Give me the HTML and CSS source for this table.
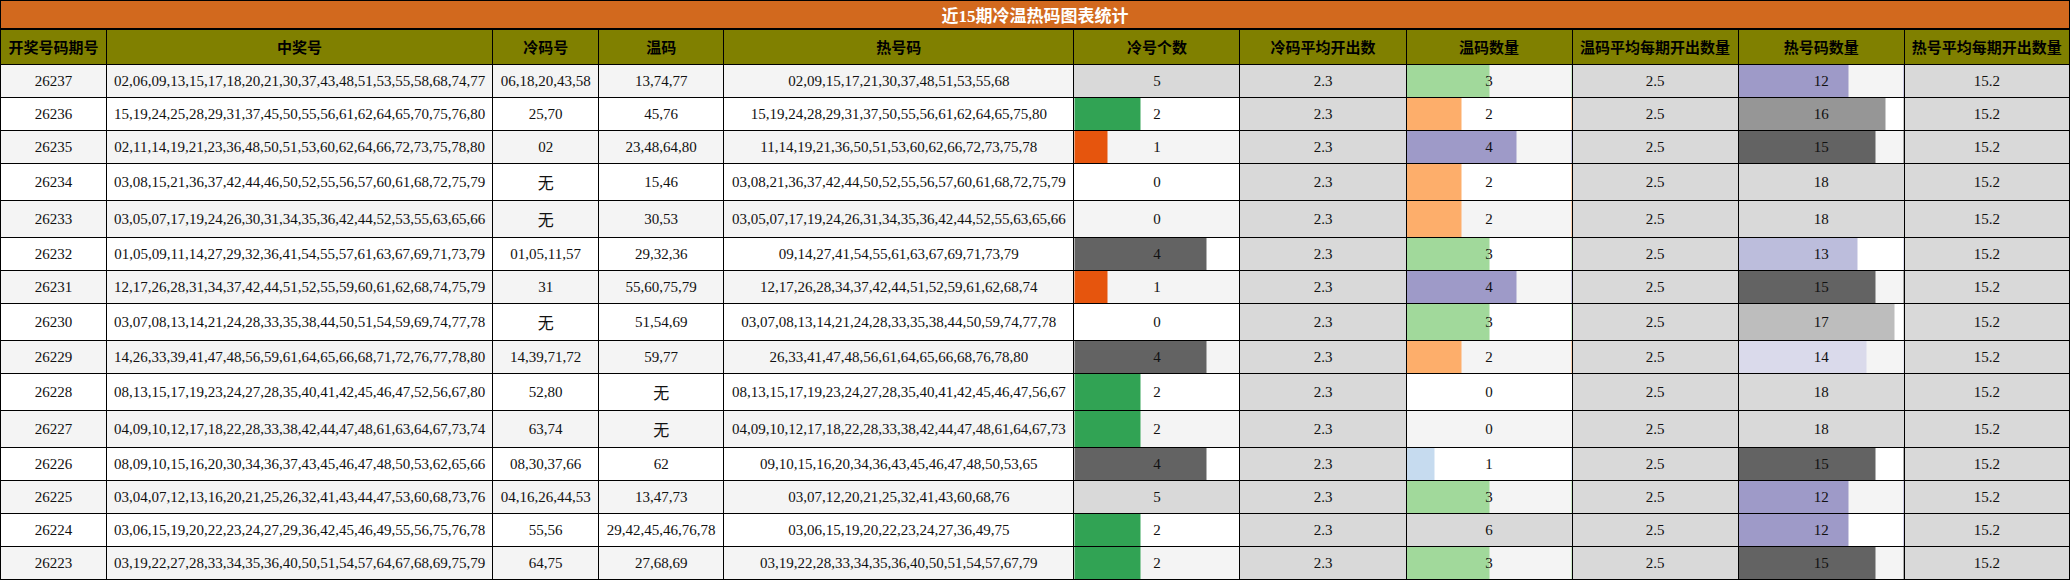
FILE: index.html
```html
<!DOCTYPE html>
<html lang="zh-CN">
<head>
<meta charset="utf-8">
<title>近15期冷温热码图表统计</title>
<link rel="stylesheet" href="styles.css">
</head>
<body>
<table class="stats">
  <colgroup>
    <col class="w-issue"><col class="w-win"><col class="w-cold"><col class="w-warm"><col class="w-hot">
    <col class="w-num"><col class="w-num"><col class="w-num"><col class="w-num"><col class="w-num"><col class="w-last">
  </colgroup>
  <thead>
    <tr><th class="title" colspan="11">近15期冷温热码图表统计</th></tr>
    <tr class="head">
      <th>开奖号码期号</th><th>中奖号</th><th>冷码号</th><th>温码</th><th>热号码</th>
      <th>冷号个数</th><th>冷码平均开出数</th><th>温码数量</th><th>温码平均每期开出数量</th><th>热号码数量</th><th>热号平均每期开出数量</th>
    </tr>
  </thead>
  <tbody>
    <tr><td>26237</td><td>02,06,09,13,15,17,18,20,21,30,37,43,48,51,53,55,58,68,74,77</td><td>06,18,20,43,58</td><td>13,74,77</td><td>02,09,15,17,21,30,37,48,51,53,55,68</td>
      <td class="bar c-grey4" style="--w:100%">5</td><td class="avg">2.3</td><td class="bar c-green3" style="--w:50%">3</td><td class="avg">2.5</td><td class="bar c-purple2" style="--w:66.67%">12</td><td class="avg">15.2</td></tr>
    <tr><td>26236</td><td>15,19,24,25,28,29,31,37,45,50,55,56,61,62,64,65,70,75,76,80</td><td>25,70</td><td>45,76</td><td>15,19,24,28,29,31,37,50,55,56,61,62,64,65,75,80</td>
      <td class="bar c-green1" style="--w:40%">2</td><td class="avg">2.3</td><td class="bar c-orange3" style="--w:33.33%">2</td><td class="avg">2.5</td><td class="bar c-grey2" style="--w:88.89%">16</td><td class="avg">15.2</td></tr>
    <tr><td>26235</td><td>02,11,14,19,21,23,36,48,50,51,53,60,62,64,66,72,73,75,78,80</td><td>02</td><td>23,48,64,80</td><td>11,14,19,21,36,50,51,53,60,62,66,72,73,75,78</td>
      <td class="bar c-orange1" style="--w:20%">1</td><td class="avg">2.3</td><td class="bar c-purple2" style="--w:66.67%">4</td><td class="avg">2.5</td><td class="bar c-grey1" style="--w:83.33%">15</td><td class="avg">15.2</td></tr>
    <tr><td>26234</td><td>03,08,15,21,36,37,42,44,46,50,52,55,56,57,60,61,68,72,75,79</td><td class="none">无</td><td>15,46</td><td>03,08,21,36,37,42,44,50,52,55,56,57,60,61,68,72,75,79</td>
      <td>0</td><td class="avg">2.3</td><td class="bar c-orange3" style="--w:33.33%">2</td><td class="avg">2.5</td><td class="bar c-grey4" style="--w:100%">18</td><td class="avg">15.2</td></tr>
    <tr><td>26233</td><td>03,05,07,17,19,24,26,30,31,34,35,36,42,44,52,53,55,63,65,66</td><td class="none">无</td><td>30,53</td><td>03,05,07,17,19,24,26,31,34,35,36,42,44,52,55,63,65,66</td>
      <td>0</td><td class="avg">2.3</td><td class="bar c-orange3" style="--w:33.33%">2</td><td class="avg">2.5</td><td class="bar c-grey4" style="--w:100%">18</td><td class="avg">15.2</td></tr>
    <tr><td>26232</td><td>01,05,09,11,14,27,29,32,36,41,54,55,57,61,63,67,69,71,73,79</td><td>01,05,11,57</td><td>29,32,36</td><td>09,14,27,41,54,55,61,63,67,69,71,73,79</td>
      <td class="bar c-grey1" style="--w:80%">4</td><td class="avg">2.3</td><td class="bar c-green3" style="--w:50%">3</td><td class="avg">2.5</td><td class="bar c-purple3" style="--w:72.22%">13</td><td class="avg">15.2</td></tr>
    <tr><td>26231</td><td>12,17,26,28,31,34,37,42,44,51,52,55,59,60,61,62,68,74,75,79</td><td>31</td><td>55,60,75,79</td><td>12,17,26,28,34,37,42,44,51,52,59,61,62,68,74</td>
      <td class="bar c-orange1" style="--w:20%">1</td><td class="avg">2.3</td><td class="bar c-purple2" style="--w:66.67%">4</td><td class="avg">2.5</td><td class="bar c-grey1" style="--w:83.33%">15</td><td class="avg">15.2</td></tr>
    <tr><td>26230</td><td>03,07,08,13,14,21,24,28,33,35,38,44,50,51,54,59,69,74,77,78</td><td class="none">无</td><td>51,54,69</td><td>03,07,08,13,14,21,24,28,33,35,38,44,50,59,74,77,78</td>
      <td>0</td><td class="avg">2.3</td><td class="bar c-green3" style="--w:50%">3</td><td class="avg">2.5</td><td class="bar c-grey3" style="--w:94.44%">17</td><td class="avg">15.2</td></tr>
    <tr><td>26229</td><td>14,26,33,39,41,47,48,56,59,61,64,65,66,68,71,72,76,77,78,80</td><td>14,39,71,72</td><td>59,77</td><td>26,33,41,47,48,56,61,64,65,66,68,76,78,80</td>
      <td class="bar c-grey1" style="--w:80%">4</td><td class="avg">2.3</td><td class="bar c-orange3" style="--w:33.33%">2</td><td class="avg">2.5</td><td class="bar c-purple4" style="--w:77.78%">14</td><td class="avg">15.2</td></tr>
    <tr><td>26228</td><td>08,13,15,17,19,23,24,27,28,35,40,41,42,45,46,47,52,56,67,80</td><td>52,80</td><td class="none">无</td><td>08,13,15,17,19,23,24,27,28,35,40,41,42,45,46,47,56,67</td>
      <td class="bar c-green1" style="--w:40%">2</td><td class="avg">2.3</td><td>0</td><td class="avg">2.5</td><td class="bar c-grey4" style="--w:100%">18</td><td class="avg">15.2</td></tr>
    <tr><td>26227</td><td>04,09,10,12,17,18,22,28,33,38,42,44,47,48,61,63,64,67,73,74</td><td>63,74</td><td class="none">无</td><td>04,09,10,12,17,18,22,28,33,38,42,44,47,48,61,64,67,73</td>
      <td class="bar c-green1" style="--w:40%">2</td><td class="avg">2.3</td><td>0</td><td class="avg">2.5</td><td class="bar c-grey4" style="--w:100%">18</td><td class="avg">15.2</td></tr>
    <tr><td>26226</td><td>08,09,10,15,16,20,30,34,36,37,43,45,46,47,48,50,53,62,65,66</td><td>08,30,37,66</td><td>62</td><td>09,10,15,16,20,34,36,43,45,46,47,48,50,53,65</td>
      <td class="bar c-grey1" style="--w:80%">4</td><td class="avg">2.3</td><td class="bar c-blue4" style="--w:16.67%">1</td><td class="avg">2.5</td><td class="bar c-grey1" style="--w:83.33%">15</td><td class="avg">15.2</td></tr>
    <tr><td>26225</td><td>03,04,07,12,13,16,20,21,25,26,32,41,43,44,47,53,60,68,73,76</td><td>04,16,26,44,53</td><td>13,47,73</td><td>03,07,12,20,21,25,32,41,43,60,68,76</td>
      <td class="bar c-grey4" style="--w:100%">5</td><td class="avg">2.3</td><td class="bar c-green3" style="--w:50%">3</td><td class="avg">2.5</td><td class="bar c-purple2" style="--w:66.67%">12</td><td class="avg">15.2</td></tr>
    <tr><td>26224</td><td>03,06,15,19,20,22,23,24,27,29,36,42,45,46,49,55,56,75,76,78</td><td>55,56</td><td>29,42,45,46,76,78</td><td>03,06,15,19,20,22,23,24,27,36,49,75</td>
      <td class="bar c-green1" style="--w:40%">2</td><td class="avg">2.3</td><td class="bar c-grey4" style="--w:100%">6</td><td class="avg">2.5</td><td class="bar c-purple2" style="--w:66.67%">12</td><td class="avg">15.2</td></tr>
    <tr><td>26223</td><td>03,19,22,27,28,33,34,35,36,40,50,51,54,57,64,67,68,69,75,79</td><td>64,75</td><td>27,68,69</td><td>03,19,22,28,33,34,35,36,40,50,51,54,57,67,79</td>
      <td class="bar c-green1" style="--w:40%">2</td><td class="avg">2.3</td><td class="bar c-green3" style="--w:50%">3</td><td class="avg">2.5</td><td class="bar c-grey1" style="--w:83.33%">15</td><td class="avg">15.2</td></tr>
  </tbody>
</table>
</body>
</html>
```
FILE: styles.css
```css
html, body {
  margin: 0;
  padding: 0;
  background: #ffffff;
}

.stats {
  width: 2070px;
  border-collapse: collapse;
  table-layout: fixed;
  font-family: "Liberation Serif", "Noto Sans CJK SC", serif;
  font-size: 15px;
  color: #111;
}

.w-issue { width: 106px; }
.w-win { width: 386px; }
.w-cold { width: 106px; }
.w-warm { width: 125px; }
.w-hot { width: 350px; }
.w-num { width: 166px; }
.w-last { width: 165px; }

.stats th,
.stats td {
  border: 1px solid #000;
  text-align: center;
  white-space: nowrap;
  overflow: hidden;
}

.stats .title {
  background: #d2691e;
  color: #ffffff;
  font-size: 17px;
  font-weight: bold;
  padding: 1px 0 1px;
  border-top: 1px solid #000;
  border-bottom: 2px solid #000;
}

.head th {
  background: #808000;
  color: #000;
  font-family: "Noto Sans CJK SC", sans-serif;
  font-size: 15px;
  font-weight: bold;
  padding: 6px 2px 7px;
}

.stats td {
  padding: 7px 2px;
  line-height: 18px;
  height: 18px;
}

.stats td.none {
  font-family: "Noto Sans CJK SC", sans-serif;
  font-size: 16px;
  line-height: 22px;
  height: 22px;
}

.stats tbody tr:nth-child(odd) { background: #f4f4f4; }
.stats tbody tr:nth-child(even) { background: #ffffff; }

.stats td.avg { background: #d9d9d9; }

.stats td.bar {
  background-image: linear-gradient(to right, var(--c) var(--w), transparent var(--w));
}

.c-orange1 { --c: #e6550d; }
.c-orange3 { --c: #fdae6b; }
.c-green1 { --c: #31a354; }
.c-green3 { --c: #a1d99b; }
.c-blue4 { --c: #c6dbef; }
.c-purple2 { --c: #9e9ac8; }
.c-purple3 { --c: #bcbddc; }
.c-purple4 { --c: #dadaeb; }
.c-grey1 { --c: #636363; }
.c-grey2 { --c: #969696; }
.c-grey3 { --c: #bdbdbd; }
.c-grey4 { --c: #d9d9d9; }
```
